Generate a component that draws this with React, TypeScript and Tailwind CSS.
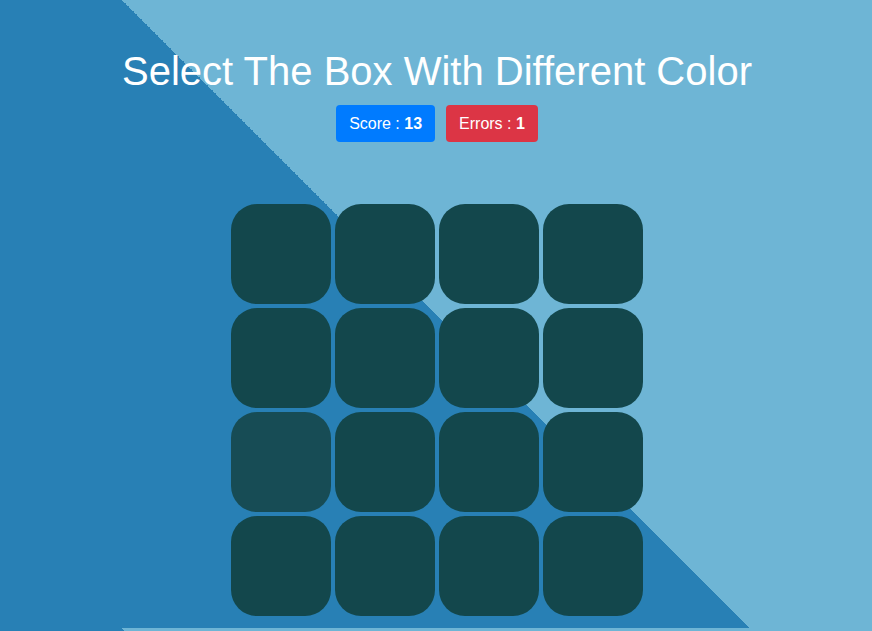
import React from "react";

export default function App() {
  const boxes = Array.from({ length: 16 }, (_, i) => i);
  return (
    <div
      className="w-full h-[631px] overflow-hidden font-['Liberation_Sans',Arial,sans-serif] bg-[linear-gradient(45deg,#2880b5_50%,#6eb5d5_50%)] bg-[length:100%_628px] bg-repeat"
    >
      <div className="flex flex-col items-center pt-[47px]">
        <h1 className="text-[40px] leading-[48px] text-white ml-[2px]">Select The Box With Different Color</h1>
        <div className="flex gap-[11px] mt-[10px] ml-[2px]">
          <div className="h-[37px] px-[13px] flex items-center rounded bg-[#007bff] text-white text-base">
            Score :&nbsp;<b>13</b>
          </div>
          <div className="h-[37px] px-[13px] flex items-center rounded bg-[#dc3545] text-white text-base">
            Errors :&nbsp;<b>1</b>
          </div>
        </div>
        <div className="grid grid-cols-[repeat(4,100px)] gap-[4px] mt-[62px] ml-[2px]">
          {boxes.map((i) => (
            <div
              key={i}
              className={
                i === 8
                  ? "w-[100px] h-[100px] rounded-[26px] bg-[#174c55]"
                  : "w-[100px] h-[100px] rounded-[26px] bg-[#13474c]"
              }
            />
          ))}
        </div>
      </div>
    </div>
  );
}
